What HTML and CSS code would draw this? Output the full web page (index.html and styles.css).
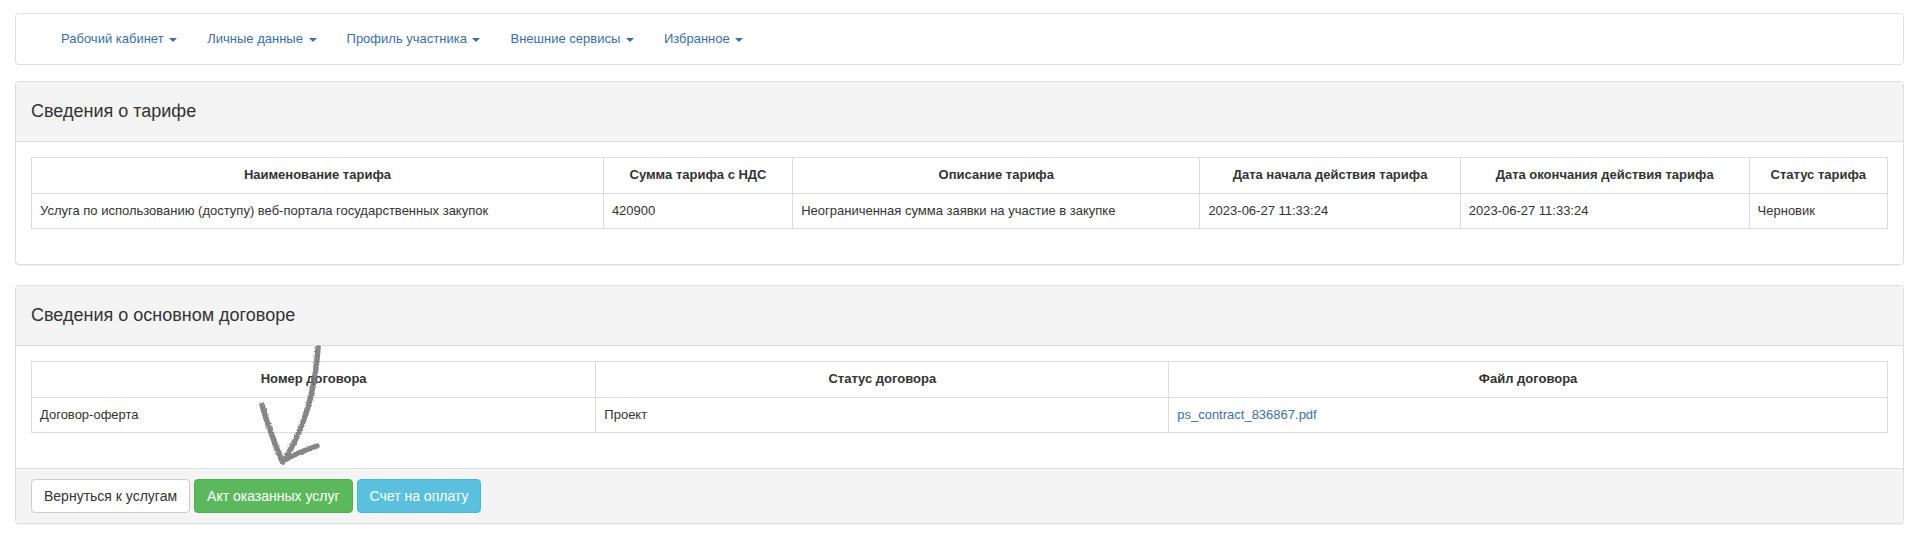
FILE: index.html
```html
<!DOCTYPE html>
<html lang="ru">
<head>
<meta charset="utf-8">
<title>Сведения о тарифе</title>
<link rel="stylesheet" href="styles.css">
</head>
<body>
<div class="page">
  <nav class="navbar">
    <ul class="nav">
      <li><a href="#">Рабочий кабинет <span class="caret"></span></a></li>
      <li><a href="#">Личные данные <span class="caret"></span></a></li>
      <li><a href="#">Профиль участника <span class="caret"></span></a></li>
      <li><a href="#">Внешние сервисы <span class="caret"></span></a></li>
      <li><a href="#">Избранное <span class="caret"></span></a></li>
    </ul>
  </nav>

  <div class="panel">
    <div class="panel-heading"><h3 class="panel-title">Сведения о тарифе</h3></div>
    <div class="panel-body">
      <table class="table">
        <thead>
          <tr>
            <th>Наименование тарифа</th>
            <th>Сумма тарифа с НДС</th>
            <th>Описание тарифа</th>
            <th>Дата начала действия тарифа</th>
            <th>Дата окончания действия тарифа</th>
            <th>Статус тарифа</th>
          </tr>
        </thead>
        <tbody>
          <tr>
            <td>Услуга по использованию (доступу) веб-портала государственных закупок</td>
            <td>420900</td>
            <td>Неограниченная сумма заявки на участие в закупке</td>
            <td>2023-06-27 11:33:24</td>
            <td>2023-06-27 11:33:24</td>
            <td>Черновик</td>
          </tr>
        </tbody>
      </table>
    </div>
  </div>

  <div class="panel">
    <div class="panel-heading"><h3 class="panel-title">Сведения о основном договоре</h3></div>
    <div class="panel-body">
      <table class="table">
        <thead>
          <tr>
            <th>Номер договора</th>
            <th>Статус договора</th>
            <th>Файл договора</th>
          </tr>
        </thead>
        <tbody>
          <tr>
            <td>Договор-оферта</td>
            <td>Проект</td>
            <td><a href="#" class="link">ps_contract_836867.pdf</a></td>
          </tr>
        </tbody>
      </table>
    </div>
    <div class="panel-footer">
      <a href="#" class="btn btn-default">Вернуться к услугам</a>
      <a href="#" class="btn btn-success">Акт оказанных услуг</a>
      <a href="#" class="btn btn-info">Счет на оплату</a>
    </div>
  </div>

  <svg class="annotation" viewBox="250 340 80 130" width="80" height="130" aria-hidden="true">
    <defs>
      <filter id="pencil" x="-20%" y="-20%" width="140%" height="140%">
        <feTurbulence type="fractalNoise" baseFrequency="0.9" numOctaves="2" seed="3" result="noise"/>
        <feDisplacementMap in="SourceGraphic" in2="noise" scale="3" xChannelSelector="R" yChannelSelector="G"/>
      </filter>
    </defs>
    <g fill="none" stroke="#717171" stroke-width="5.5" stroke-linecap="round" stroke-linejoin="round" filter="url(#pencil)" opacity="0.85">
      <path d="M318 348 C316 375 310 405 301 427 C295 442 289 453 283 462"/>
      <path d="M262 405 C267 423 274 442 282 461"/>
      <path d="M283 461 C293 455 305 450 317 446"/>
    </g>
  </svg>
</div>
</body>
</html>
```

FILE: styles.css
```css
* {
  box-sizing: border-box;
}

html, body {
  margin: 0;
  padding: 0;
  background: #fff;
}

body {
  font-family: "Liberation Sans", Arial, Helvetica, sans-serif;
  font-size: 13px;
  line-height: 1.42857;
  color: #333;
}

.page {
  position: relative;
  padding: 13px 15px 0;
}

/* navbar */
.navbar {
  min-height: 52px;
  background: #fff;
  border: 1px solid #e0e0e0;
  border-radius: 4px;
  margin-bottom: 16px;
  padding-left: 30px;
}

.nav {
  list-style: none;
  margin: 0;
  padding: 0;
  display: flex;
}

.nav a {
  display: block;
  padding: 15px;
  line-height: 20px;
  font-size: 13px;
  color: #3d6fa6;
  text-decoration: none;
}

.caret {
  display: inline-block;
  width: 0;
  height: 0;
  margin-left: 2px;
  vertical-align: middle;
  border-top: 4px solid;
  border-right: 4px solid transparent;
  border-left: 4px solid transparent;
}

/* panels */
.panel {
  background: #fff;
  border: 1px solid #ddd;
  border-radius: 4px;
  margin-bottom: 20px;
  box-shadow: 0 1px 1px rgba(0, 0, 0, 0.05);
}

.panel-heading {
  background: #f4f4f4;
  border-bottom: 1px solid #ddd;
  border-radius: 3px 3px 0 0;
  padding: 20px 15px;
}

.panel-title {
  margin: 0;
  font-size: 18px;
  font-weight: normal;
  line-height: 19px;
  color: #333;
}

.panel-body {
  padding: 15px;
}

.panel-footer {
  background: #f4f4f4;
  border-top: 1px solid #ddd;
  border-radius: 0 0 3px 3px;
  padding: 10px 15px;
  display: flex;
  gap: 4px;
}

/* tables */
.table {
  width: 100%;
  border-collapse: collapse;
  border: 1px solid #ddd;
  margin-bottom: 20px;
}

.table th,
.table td {
  border: 1px solid #ddd;
  padding: 8px;
  line-height: 1.42857;
  font-size: 13px;
  vertical-align: top;
  text-align: left;
}

.table th {
  text-align: center;
  font-weight: bold;
  color: #333;
}

.link {
  color: #3d6fa6;
  text-decoration: none;
}

/* buttons */
.btn {
  display: inline-block;
  padding: 6px 12px;
  font-size: 14px;
  line-height: 20px;
  border: 1px solid transparent;
  border-radius: 4px;
  text-decoration: none;
  white-space: nowrap;
}

.btn-default {
  color: #333;
  background: #fff;
  border-color: #ccc;
}

.btn-success {
  color: #fff;
  background: #5cb85c;
  border-color: #4cae4c;
}

.btn-info {
  color: #fff;
  background: #5bc0de;
  border-color: #46b8da;
}

/* hand-drawn annotation arrow over the content */
.annotation {
  position: absolute;
  left: 250px;
  top: 340px;
  pointer-events: none;
}
```
